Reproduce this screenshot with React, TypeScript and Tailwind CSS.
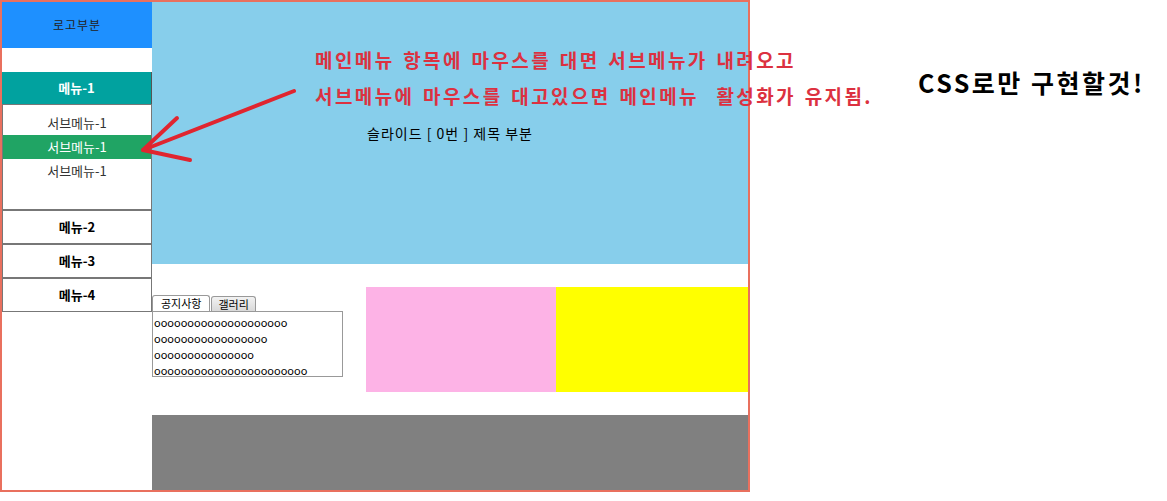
import React from 'react';

const subItems = ['서브메뉴-1', '서브메뉴-1', '서브메뉴-1'];
const notices = [
  'oooooooooooooooooooo',
  'ooooooooooooooooo',
  'ooooooooooooooo',
  'ooooooooooooooooooooooo',
];

export default function App() {
  return (
    <div className="relative w-[1167px] h-[501px] bg-white text-black font-['Noto_Sans_CJK_KR','Noto_Sans',sans-serif]">
      <div className="w-[750px] h-[492px] border-2 border-[#e9705e] flex">
        {/* sidebar */}
        <aside className="w-[150px] flex flex-col">
          <div className="h-[46px] bg-[#1e90ff] flex items-center justify-center text-[12px] tracking-[1px] text-[#222]">
            로고부분
          </div>
          <ul className="mt-[24px]">
            <li>
              <div className="h-[32px] bg-[#01a29f] border-r border-[#555] flex items-center justify-center text-[13px] font-bold text-white">
                메뉴-1
              </div>
              <ul className="h-[106px] border border-[#777] pt-[6px]">
                {subItems.map((s, i) => (
                  <li
                    key={i}
                    className={
                      i === 1
                        ? 'h-[24px] flex items-center justify-center text-[13px] bg-[#20a464] text-white'
                        : 'h-[24px] flex items-center justify-center text-[13px] text-[#333]'
                    }
                  >
                    {s}
                  </li>
                ))}
              </ul>
            </li>
            {['메뉴-2', '메뉴-3', '메뉴-4'].map((m) => (
              <li
                key={m}
                className="h-[34px] border border-[#777] flex items-center justify-center text-[13px] font-bold"
              >
                {m}
              </li>
            ))}
          </ul>
        </aside>

        {/* content */}
        <main className="flex-1 flex flex-col">
          <div className="h-[262px] bg-[#87ceeb] flex items-center justify-center text-[14px] tracking-[1px] whitespace-pre">
            슬라이드 [ 0번 ] 제목 부분
          </div>
          <div className="h-[151px] flex">
            <div className="w-[191px] mt-[31px]">
              <div className="flex items-end h-[16px]">
                <div className="h-[16px] px-[8px] border border-b-0 border-[#999] rounded-t-[3px] bg-white text-[11px] leading-[15px]">
                  공지사항
                </div>
                <div className="h-[15px] ml-[1px] px-[6px] border border-b-0 border-[#999] rounded-t-[3px] bg-gradient-to-b from-[#f2f2f2] to-[#d9d9d9] text-[11px] leading-[14px]">
                  갤러리
                </div>
              </div>
              <div className="h-[66px] border border-[#999] pt-[2px]">
                {notices.map((n, i) => (
                  <div key={i} className="text-[11px] leading-[16px] pl-[1px]">
                    {n}
                  </div>
                ))}
              </div>
            </div>
            <div className="ml-[23px] mt-[23px] h-[105px] flex flex-1">
              <div className="w-[190px] bg-[#fdb3e6]" />
              <div className="flex-1 bg-[#ffff00]" />
            </div>
          </div>
          <div className="flex-1 bg-[#808080]" />
        </main>
      </div>

      {/* annotations */}
      <div className="absolute left-[315px] top-[42px] text-[19px] leading-[36px] font-bold tracking-[2.4px] [word-spacing:2px] text-[#dc3140] whitespace-pre">
        <div>메인메뉴 항목에 마우스를 대면 서브메뉴가 내려오고</div>
        <div>서브메뉴에 마우스를 대고있으면 메인메뉴  활성화가 유지됨.</div>
      </div>
      <svg
        className="absolute left-0 top-0"
        width="320"
        height="180"
        viewBox="0 0 320 180"
        fill="none"
        stroke="#e0252f"
        strokeWidth="4"
        strokeLinecap="round"
        strokeLinejoin="round"
      >
        <path d="M294 91 L143 150" />
        <path d="M177 118 L143 150 L190 160" />
      </svg>
      <div className="absolute left-[918px] top-[65px] text-[25px] leading-[34px] font-bold tracking-[2.5px]">
        CSS로만 구현할것!
      </div>
    </div>
  );
}
